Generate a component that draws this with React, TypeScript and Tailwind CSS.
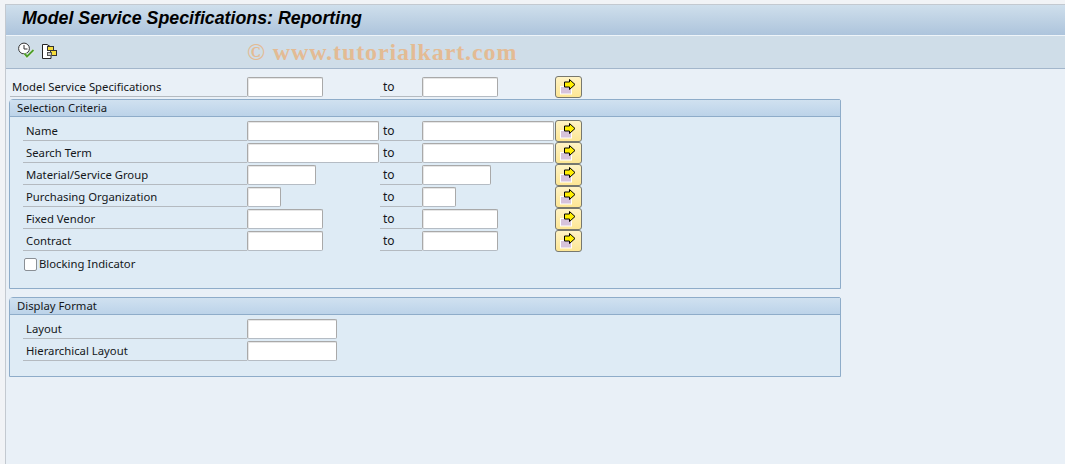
const font = "font-['Noto_Sans',sans-serif]";

function ArrowIcon() {
  return (
    <svg width="17" height="16" viewBox="0 0 17 16">
      <rect x="0.5" y="7.5" width="11" height="7.5" fill="#d6c3dc" stroke="#ffffff" />
      <path d="M9.5 0.5 L15 5.5 L9.5 10.5 V8 H4.5 V3 H9.5 Z" fill="#ffee00" stroke="#000000" strokeWidth="1" />
    </svg>
  );
}

function ClockCheckIcon() {
  return (
    <svg width="18" height="18" viewBox="0 0 18 18">
      <circle cx="6" cy="6.5" r="5.4" fill="#ffffff" stroke="#333333" strokeWidth="1" />
      <path d="M6 3 V7 H9.5" fill="none" stroke="#333333" strokeWidth="1" />
      <path d="M6.5 11.5 L9 14.5 L15.5 8" fill="none" stroke="#ffffff" strokeWidth="3" />
      <path d="M6.5 11.5 L9 14.5 L15.5 8" fill="none" stroke="#4f9e2d" strokeWidth="2" />
    </svg>
  );
}

function CopyIcon() {
  return (
    <svg width="16" height="16" viewBox="0 0 16 16">
      <path d="M0.5 1.5 H5 L9 4 V15.5 H0.5 Z" fill="#ffffff" stroke="#222222" />
      <rect x="5.5" y="3.5" width="6" height="4" fill="#f5dc3c" stroke="#333333" />
      <rect x="8.5" y="7.5" width="6" height="5" fill="#f5dc3c" stroke="#333333" />
      <rect x="5.5" y="9.5" width="4" height="3" fill="#c9ccd0" stroke="#555555" />
    </svg>
  );
}

function Input({ width }: { width: string }) {
  return (
    <div
      className={`${width} h-5 bg-white border border-[#a9a9a9] border-b-[#b5bcc4] rounded-[2px] shadow-[inset_1px_1px_0_#e6e6e6]`}
    />
  );
}

function SelectButton() {
  return (
    <div className="w-[27px] h-[22px] -mt-px flex items-center justify-center rounded-[3px] border border-[#77786f] bg-gradient-to-b from-[#fff3c4] to-[#fde694]">
      <ArrowIcon />
    </div>
  );
}

function RangeRow({
  label,
  lowWidth,
  highWidth,
  labelClass = 'w-[224px] pl-[3px]',
}: {
  label: string;
  lowWidth: string;
  highWidth: string;
  labelClass?: string;
}) {
  return (
    <div className="flex h-5 text-[11.3px] text-[#14171a]">
      <div className={`${labelClass} h-5 border-b border-[#b4bac0] leading-[20px]`}>{label}</div>
      <div className="w-[133px]">
        <Input width={lowWidth} />
      </div>
      <div className="w-[42px] h-5 pl-[3px] border-b border-[#b4bac0] leading-[20px] text-[12px]">to</div>
      <div className="w-[133px]">
        <Input width={highWidth} />
      </div>
      <SelectButton />
    </div>
  );
}

function SingleRow({ label }: { label: string }) {
  return (
    <div className="flex h-5 text-[11.3px] text-[#14171a]">
      <div className="w-[224px] pl-[3px] h-5 border-b border-[#b4bac0] leading-[20px]">{label}</div>
      <Input width="w-[90px]" />
    </div>
  );
}

function Group({ title, height, children }: { title: string; height: string; children: React.ReactNode }) {
  return (
    <div className={`w-[832px] ${height} ml-[3px] border border-[#8eacc9] rounded-tl-[4px] rounded-tr-[2px] bg-[#deebf5]`}>
      <div className="h-[17px] px-[7px] border-b border-[#8eacc9] bg-gradient-to-b from-[#d0e1f0] to-[#bcd3e9] text-[11.3px] leading-[16px] text-[#14171a]">
        {title}
      </div>
      <div className="pt-1 pl-[13px] flex flex-col gap-[2px]">{children}</div>
    </div>
  );
}

export default function App() {
  return (
    <div className={`${font} relative w-[1065px] h-[464px] overflow-hidden bg-[#f1f3f6] pt-1 pl-[5px]`}>
      <div className="h-full border-t border-l border-[#c3c9d0] bg-[#e9f0f7]">
        <div className="h-[31px] flex items-center pl-[16px] pb-[3px] bg-gradient-to-b from-[#cfdfec] to-[#adc4dc] border-b border-[#eef4f9] font-['Liberation_Sans',sans-serif] text-[17.8px] font-bold italic text-black">
          Model Service Specifications: Reporting
        </div>
        <div className="h-[33px] flex items-center gap-[6px] pl-[12px] pb-[3px] bg-[#cfdde8] border-b border-[#a3b6cb]">
          <ClockCheckIcon />
          <CopyIcon />
        </div>
        <div className="pt-2">
          <RangeRow
            label="Model Service Specifications"
            labelClass="w-[237px] ml-[4px] pl-[2px]"
            lowWidth="w-[76px]"
            highWidth="w-[76px]"
          />
          <div className="h-[2px]" />
          <Group title="Selection Criteria" height="h-[190px]">
            <RangeRow label="Name" lowWidth="w-[132px]" highWidth="w-[132px]" />
            <RangeRow label="Search Term" lowWidth="w-[132px]" highWidth="w-[132px]" />
            <RangeRow label="Material/Service Group" lowWidth="w-[69px]" highWidth="w-[69px]" />
            <RangeRow label="Purchasing Organization" lowWidth="w-[34px]" highWidth="w-[34px]" />
            <RangeRow label="Fixed Vendor" lowWidth="w-[76px]" highWidth="w-[76px]" />
            <RangeRow label="Contract" lowWidth="w-[76px]" highWidth="w-[76px]" />
            <div className="flex items-center h-5 mt-[1px] text-[11.3px] text-[#14171a]">
              <div className="w-[13px] h-[13px] ml-[1px] mr-[2px] bg-white border border-[#8a8f95] rounded-[2px]" />
              Blocking Indicator
            </div>
          </Group>
          <div className="h-2" />
          <Group title="Display Format" height="h-[80px]">
            <SingleRow label="Layout" />
            <SingleRow label="Hierarchical Layout" />
          </Group>
        </div>
      </div>
      <div className="absolute left-[247px] top-[38px] font-['Liberation_Serif',serif] font-bold text-[24px] leading-7 tracking-[0.9px] text-[#e6b88c] opacity-90">
        © www.tutorialkart.com
      </div>
    </div>
  );
}
